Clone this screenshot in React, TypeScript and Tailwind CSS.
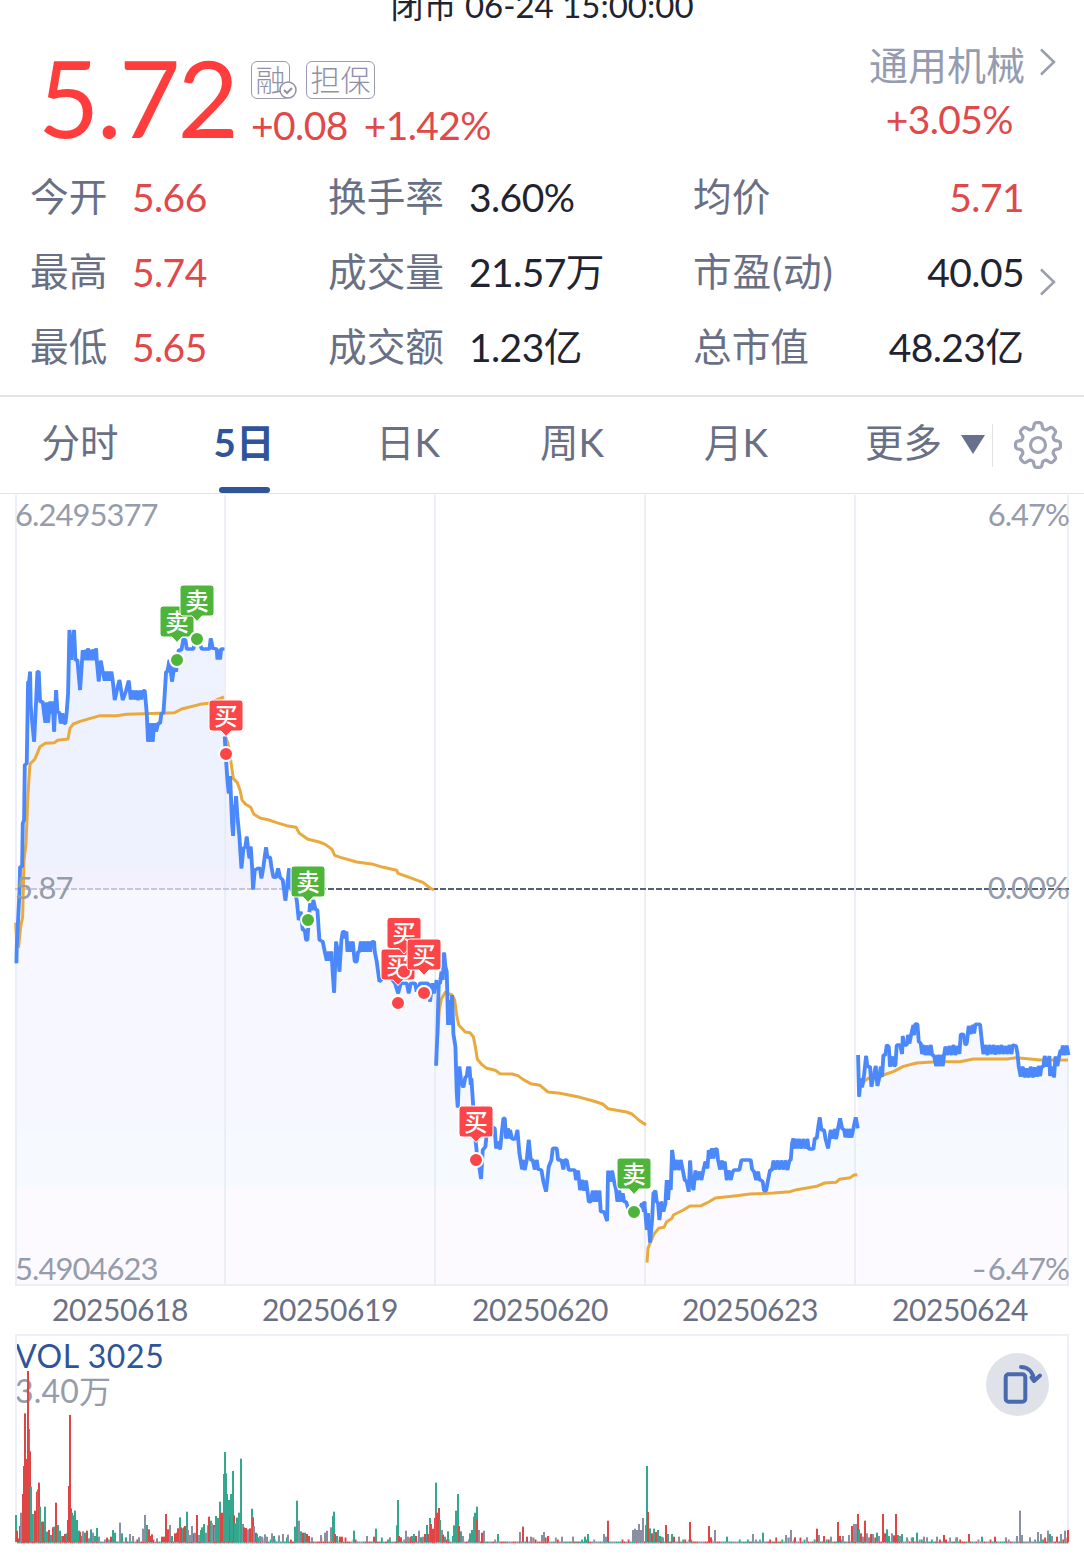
import React from "react";

const FONT = "font-['Lato','Noto_Sans_CJK_SC',sans-serif]";

type Session = { x: number; y: number; price: string; average: string; end: number; start: number };

// Each session is stored in thirds of a pixel, relative to its own origin.
const sessions: Session[] = [
  {
    x: 0, y: 560, start: 49, end: 672,
    price:
      "49 1210 50 1160 58 1000 60 920 66 920 68 790 72 780 74 615 80 610 84 365 87 365 90 335 92 440 102 545 108 425 112 335 116 335 120 425 128 425 132 460 136 488 140 428 144 488 150 425 154 460 158 425 162 515 168 390 172 455 178 458 182 490 188 460 192 490 196 490 200 455 204 400 208 210 211 240 214 300 218 240 222 210 226 300 232 300 240 390 248 270 252 300 256 270 260 300 264 265 268 300 272 270 276 300 280 268 284 300 288 265 290 300 296 364 302 302 308 335 314 362 318 335 322 362 326 335 330 362 334 335 338 362 344 420 350 392 358 360 368 420 378 392 386 362 392 418 398 392 404 418 408 392 414 420 420 392 424 418 430 392 434 392 440 460 444 545 448 490 452 545 456 490 458 545 462 490 468 515 474 490 480 490 484 460 490 460 494 400 498 335 502 335 508 300 516 365 522 320 528 335 532 300 536 270 544 270 550 237 556 240 560 267 580 267 585 240 595 240 605 267 628 267 632 235 638 265 650 267 652 298 655 270 660 298 663 267 672 267",
    average:
      "47 1088 50 1150 56 1160 62 1100 68 1070 72 900 78 850 84 700 90 612 104 598 112 580 120 560 136 550 164 548 172 541 204 537 210 505 220 492 240 484 300 467 350 467 380 463 430 461 524 458 545 447 600 433 625 430 650 420 672 411",
  },
  {
    x: 210, y: 690, start: 44, end: 680,
    price:
      "44 140 46 180 52 270 56 310 60 258 66 400 69 438 72 350 76 345 78 318 82 380 88 440 94 535 100 475 106 470 110 440 114 475 118 505 122 470 126 530 129 598 134 540 144 535 150 535 154 565 160 530 164 500 168 472 172 502 180 502 184 530 190 562 198 562 204 535 210 562 218 570 222 600 226 632 232 580 237 535 240 590 245 600 255 610 260 630 266 690 272 665 278 720 284 720 288 750 292 750 296 690 300 640 306 660 310 630 316 658 322 660 328 750 338 755 344 785 350 812 354 785 358 812 364 785 368 850 372 908 378 755 384 790 388 845 394 750 398 725 404 725 404 745 409 725 412 785 418 755 422 785 428 755 434 815 440 815 444 785 448 785 452 755 458 785 462 755 468 785 474 755 480 785 486 755 492 755 494 785 500 815 508 875 530 850 555 880 564 910 572 880 590 880 596 910 602 880 615 880 620 905 630 880 654 880 660 935 666 880 672 910 680 870",
    average:
      "46 140 54 160 62 210 70 266 82 278 90 300 96 330 106 342 122 352 132 373 150 384 180 391 200 398 230 407 258 412 268 430 294 448 328 456 346 463 366 478 374 496 394 503 440 516 490 523 520 532 560 541 564 550 600 563 640 578 660 594 672 600",
  },
  {
    x: 380, y: 900, start: 168, end: 794,
    price:
      "168 497 172 400 176 250 180 250 184 215 188 240 192 158 196 200 200 215 204 375 208 300 212 375 216 285 220 402 226 440 230 580 233 622 238 500 244 550 250 562 256 530 260 530 264 500 267 530 268 500 272 555 274 535 279 612 284 700 290 755 296 790 303 837 308 750 316 740 320 700 335 680 344 685 348 745 354 725 360 748 366 690 370 655 374 655 378 715 384 685 388 715 390 690 396 717 406 717 412 690 418 760 426 808 430 780 434 810 440 780 446 720 452 780 458 780 464 808 470 780 474 808 484 810 490 845 498 875 506 800 514 780 518 745 530 745 534 780 544 780 550 808 554 780 560 780 566 810 584 810 588 840 594 812 600 870 606 840 612 872 618 842 622 872 626 905 632 905 638 872 642 905 648 872 652 905 658 872 662 935 672 935 681 963 684 812 690 845 696 812 702 845 708 870 712 905 718 872 722 905 728 880 732 905 738 905 744 925 780 925 786 910 790 935 794 905",
    average:
      "172 420 178 330 184 297 196 277 216 285 224 300 230 345 236 375 256 396 270 398 280 410 286 440 292 478 306 494 320 505 346 511 360 521 396 522 414 527 430 539 452 551 480 556 504 576 540 580 600 592 640 603 668 612 684 626 740 636 756 642 776 660 798 675",
  },
  {
    x: 630, y: 1000, start: 44, end: 683,
    price:
      "42 605 46 640 50 690 54 640 60 728 66 660 70 580 76 572 80 605 84 610 88 660 94 605 100 635 106 610 110 540 114 600 118 540 122 570 126 450 130 480 134 510 140 480 146 510 152 480 158 510 164 540 170 545 176 575 180 482 184 545 190 570 196 512 202 540 208 515 214 540 220 510 226 485 232 505 236 450 240 475 246 445 250 475 256 447 260 447 264 480 270 508 276 482 280 508 284 485 290 540 296 512 302 540 308 515 312 510 328 510 334 480 362 480 366 508 372 515 378 540 384 515 388 540 392 540 398 545 402 572 408 572 414 540 420 510 426 510 430 482 436 508 442 482 448 508 454 482 460 508 466 482 472 510 478 482 482 480 486 430 490 415 494 445 500 417 504 445 508 417 514 445 520 417 526 445 532 417 536 447 550 447 554 415 560 415 564 385 569 352 574 390 582 390 586 415 594 445 602 390 608 415 614 387 618 417 624 385 630 355 636 385 642 390 646 412 650 387 656 412 660 387 664 412 670 385 677 352 683 385",
    average:
      "51 788 54 745 62 725 72 702 86 685 102 682 110 665 126 655 130 645 160 630 180 618 214 617 236 606 256 594 320 587 360 582 430 579 480 575 500 569 560 559 584 549 618 547 628 538 660 533 672 525 682 524",
  },
  {
    x: 840, y: 1000, start: 54, end: 685,
    price:
      "54 165 57 290 62 235 66 262 72 225 78 168 82 200 90 200 94 260 100 230 107 198 112 258 118 230 122 200 126 230 130 165 136 165 140 135 146 140 150 200 156 170 162 198 166 195 170 135 180 135 186 162 188 108 192 135 200 135 204 105 208 130 214 100 220 75 222 105 226 72 232 72 236 125 242 130 246 162 250 135 256 165 260 137 266 165 272 135 276 165 282 167 288 198 294 165 298 198 304 165 308 198 312 165 316 140 322 165 328 138 334 165 340 135 346 165 352 138 358 162 362 103 370 103 376 135 380 130 386 78 392 102 398 75 402 100 406 73 420 73 426 130 430 162 436 135 442 165 448 135 454 162 460 135 466 163 472 137 478 162 484 135 490 162 496 138 502 162 508 135 514 162 518 135 528 138 532 160 536 200 542 230 548 200 554 232 560 205 566 232 572 200 578 232 584 202 590 230 596 198 600 228 604 200 610 200 614 168 620 200 628 168 630 228 636 200 642 232 646 170 652 198 658 165 662 150 664 165 668 137 674 165 680 137 685 165",
    average:
      "66 260 72 245 84 235 120 232 130 225 160 215 190 199 230 189 290 185 360 185 400 177 500 177 530 173 570 177 600 180 684 180",
  },
];

const trades: { x: number; y: number; side: "买" | "卖" }[] = [
  { x: 177, y: 660, side: "卖" },
  { x: 197, y: 639, side: "卖" },
  { x: 226, y: 754, side: "买" },
  { x: 308, y: 920, side: "卖" },
  { x: 398, y: 1003, side: "买" },
  { x: 404, y: 971.5, side: "买" },
  { x: 424, y: 993, side: "买" },
  { x: 476, y: 1160, side: "买" },
  { x: 634, y: 1212, side: "卖" },
];

const volumes: { x: number; bars: string }[] = [
  {
    x: 0,
    bars:
      "47 675 g,52 722 r,56 745 r,60 708 r,64 668 y,68 612 r,71 528 r,74 370 r,78 507 r,81 515 r,87 417 g,84 243 r,90 484 r,93 590 g,98 672 g,102 672 y,106 662 r,111 605 r,114 598 g,117 578 r,121 650 g,126 695 g,129 695 r,135 650 g,140 725 g,147 720 r,152 735 g,158 712 r,163 710 g,168 638 r,174 705 g,180 722 g,185 738 y,190 738 r,196 732 r,200 730 g,204 690 r,207 588 r,210 375 r,213 655 r,217 668 g,222 676 g,226 662 g,230 690 g,236 722 g,240 725 r,246 738 g,250 724 y,256 728 g,261 722 r,268 745 y,273 718 g,280 728 y,286 738 g,291 714 g,297 740 y,320 743 r,334 740 r,339 720 g,344 728 g,360 698 y,366 730 g,378 742 g,390 732 y,400 738 y,416 742 y,430 716 y,435 675 y,441 705 g,446 718 r,450 738 r,456 733 r,470 745 y,486 740 r,492 740 r,498 672 r,503 718 r,510 705 y,516 738 g,525 730 r,530 728 r,535 715 r,540 682 g,544 712 r,548 715 g,552 712 r,556 708 r,561 665 g,565 720 y,570 735 y,576 708 y,582 730 r,586 728 y,591 675 r,596 735 y,602 720 g,607 712 g,612 702 g,618 728 y,624 706 y,628 680 r,632 692 g,636 700 y,641 705 r,645 712 y,648 678 g,654 684 g,660 635 g,664 668 r,668 668 r,672 552 g,675 486 g,678 550 g,682 612 g,686 630 g,690 635 g,689 680 r,694 612 g,698 543 g,702 676 r,706 700 g,711 683 g,716 668 g,720 680 y,723 506 g,728 702 y,732 712 r,738 714 r,744 718 y,750 715 r,755 656 g,759 682 r,762 708 y,768 728 r,772 732 g,780 738 y,786 740 y,794 733 y,800 740 y,816 730 y,822 738 g,836 736 y,850 732 y,864 734 y,886 710 g,891 632 g,896 692 y,902 724 g,908 728 r,914 728 g,920 732 r,926 738 r,936 742 y,964 735 y,975 728 y,982 722 y,992 712 y,998 678 g,1002 665 g,1006 732 r,1012 738 g,1020 740 r,1026 740 r,1062 722 g",
  },
  {
    x: 360,
    bars:
      "22 738 y,42 740 r,48 716 g,90 742 y,110 706 g,113 630 g,118 738 r,123 742 r,138 722 y,145 740 y,152 740 r,157 738 g,162 732 g,168 738 r,176 722 y,182 742 g,190 740 y,196 732 r,201 705 g,205 732 r,209 684 g,213 702 r,218 716 r,224 684 r,228 578 g,232 668 r,237 654 r,240 690 g,245 720 y,250 734 r,256 740 g,264 724 g,278 738 g,283 706 g,288 662 g,294 612 g,297 708 r,303 724 g,308 738 y,330 730 g,335 720 g,341 680 g,346 668 g,351 650 g,351 688 r,358 720 y,365 728 r,372 722 y,414 732 g,480 726 y,489 710 r,500 740 r,512 740 y,545 735 y,551 726 y,564 738 r,605 740 y,640 740 y,674 740 g,684 732 g,732 732 y,738 740 y,744 692 r,818 720 y,824 716 y,830 720 y,837 702 y,842 720 y,849 684 y,857 705 g,861 528 g,864 666 r,870 715 g,876 730 r,882 716 g,887 726 r,893 720 g,900 738 g,906 740 y,918 705 r,924 732 g,936 732 g,941 740 r,956 740 y,990 696 r,1047 708 r,1052 742 r,1065 720 y",
  },
  {
    x: 720,
    bars:
      "22 740 g,98 732 y,129 728 g,198 735 y,212 720 y,224 742 r,260 742 y,291 716 r,297 735 y,311 738 r,332 740 y,354 696 r,359 738 r,369 738 y,388 735 y,396 708 r,402 702 y,408 702 y,413 672 r,417 718 g,422 730 r,428 740 y,434 692 r,440 730 y,446 742 y,453 732 r,460 732 y,470 728 g,478 738 y,489 672 r,494 730 r,502 718 g,508 738 g,515 730 y,521 736 r,528 672 r,534 735 g,540 738 y,547 732 g,560 742 y,578 742 g,590 728 g,612 740 y,620 742 y,651 740 y,672 735 r,712 742 y,747 732 r,786 740 g,825 740 r,858 742 y,890 738 y,900 662 y,905 735 y,930 742 y,954 726 y,963 732 y,984 722 y,990 732 g,996 738 y,1012 740 r,1024 732 y,1035 722 y,1044 720 r",
  },
];

const barColor: Record<string, string> = { r: "#e04545", g: "#34a88f", y: "#8a8fa2" };

// Low background turnover between the peaks.
const quietBars = Array.from({ length: 520 }, (_, i) => {
  const n = Math.abs(Math.sin(i * 12.9898) * 43758.5453) % 1;
  const m = Math.abs(Math.sin(i * 78.233) * 12543.123) % 1;
  return { x: 17 + i * 2.022, h: n > 0.9 ? 5 : n > 0.72 ? 3 : 1, c: m > 0.66 ? "r" : m > 0.33 ? "y" : "g" };
});

const gridX = [16, 225, 435, 645, 855, 1068];

function PriceChart() {
  return (
    <svg className="block" width="1084" height="793" viewBox="0 494 1084 793">
      <defs>
        <linearGradient id="area" gradientUnits="userSpaceOnUse" x1="0" y1="600" x2="0" y2="1285">
          <stop offset="0" stopColor="#eef3ff" />
          <stop offset="0.38" stopColor="#eef1fe" />
          <stop offset="0.42" stopColor="#f5f1fd" />
          <stop offset="0.422" stopColor="#f6f7ff" />
          <stop offset="0.773" stopColor="#f6f7ff" />
          <stop offset="0.774" stopColor="#f6faff" />
          <stop offset="0.857" stopColor="#f6faff" />
          <stop offset="0.858" stopColor="#fdfaff" />
          <stop offset="1" stopColor="#fdfaff" />
        </linearGradient>
      </defs>
      {sessions.map((s) => (
        <g key={s.x}>
          <clipPath id={`clip${s.x}`}>
            <polygon
              transform={`translate(${s.x} ${s.y}) scale(0.33333)`}
              points={`${s.start} ${(1285 - s.y) * 3} ${s.price} ${s.end} ${(1285 - s.y) * 3}`}
            />
          </clipPath>
          <rect x="0" y="560" width="1084" height="725" fill="url(#area)" clipPath={`url(#clip${s.x})`} />
        </g>
      ))}
      <g stroke="#dfe6f0" strokeOpacity="0.6" strokeWidth="2">
        {gridX.map((x) => (
          <line key={x} x1={x} x2={x} y1="495" y2="1285" />
        ))}
        <line x1="15" x2="1069" y1="1285" y2="1285" />
      </g>
      <line x1="15" x2="296" y1="889" y2="889" stroke="#c3c6dc" strokeWidth="2" strokeDasharray="6 2" />
      <line x1="296" x2="1069" y1="889" y2="889" stroke="#52617f" strokeWidth="2" strokeDasharray="6 2" />
      {sessions.map((s) => (
        <g
          key={s.x}
          transform={`translate(${s.x} ${s.y}) scale(0.33333)`}
          fill="none"
          strokeWidth="9"
          strokeLinejoin="round"
        >
          <polyline points={s.average} stroke="#e9a93c" />
          <polyline points={s.price} stroke="#4b88fb" strokeLinejoin="bevel" transform="translate(-1 0)" />
          <polyline points={s.price} stroke="#4b88fb" strokeLinejoin="bevel" transform="translate(1.5 0)" />
        </g>
      ))}
      {trades.map((t) => (
        <g key={`${t.x}-${t.y}`} fill={t.side === "买" ? "#fc4548" : "#4fb43a"}>
          <path
            d={`M${t.x - 14} ${t.y - 54}h28a3 3 0 0 1 3 3v25a3 3 0 0 1 -3 3h-9l-5 5.500l-5 -5.500h-9a3 3 0 0 1 -3 -3v-25a3 3 0 0 1 3 -3z`}
            stroke="#fff"
            strokeWidth="1"
          />
          <text
            x={t.x - 0.5}
            y={t.y - 29.5}
            textAnchor="middle"
            fill="#fff"
            className="font-['Noto_Sans_CJK_SC',sans-serif] text-[23.5px] font-medium"
          >
            {t.side}
          </text>
          <circle cx={t.x} cy={t.y} r="7" stroke="#fff" strokeWidth="2" />
        </g>
      ))}
    </svg>
  );
}

function VolumeChart() {
  return (
    <svg className="block" width="1084" height="223" viewBox="0 1334 1084 223">
      <path d="M16 1544V1335H1068V1544M15 1543H1069" fill="none" stroke="#edf0f6" strokeWidth="2" />
      {quietBars.map((b) => (
        <rect key={b.x} x={b.x} y={1542.5 - b.h} width="1.900" height={b.h + 0.8} fill={barColor[b.c]} />
      ))}
      {volumes.map((v) =>
        v.bars.split(",").map((bar) => {
          const [x, top, c] = bar.split(" ");
          const y = 1290 + Number(top) / 3;
          return (
            <rect
              key={`${v.x}-${bar}`}
              x={Math.round(v.x + Number(x) / 3 - 1)}
              y={y}
              width="2"
              height={1542 - y}
              fill={barColor[c]}
            />
          );
        }),
      )}
    </svg>
  );
}

const gearPath =
  Array.from({ length: 144 }, (_, i) => {
    const a = (i / 144) * Math.PI * 2;
    const r = 19.6 + 2.9 * Math.tanh(2.2 * Math.cos(8 * a) + 0.3);
    return `${i ? "L" : "M"}${(25 + r * Math.cos(a)).toFixed(2)} ${(25 + r * Math.sin(a)).toFixed(2)}`;
  }).join("") + "Z";

function Gear() {
  return (
    <svg width="50" height="50" viewBox="0 0 50 50" fill="none" stroke="#9da3b4" strokeWidth="3.200" strokeLinejoin="round">
      <path d={gearPath} />
      <circle cx="25" cy="25" r="7.500" />
    </svg>
  );
}

function Chevron() {
  return (
    <svg className="block" width="18" height="28" viewBox="0 0 18 28" fill="none" stroke="#9a9dab" strokeWidth="2.500">
      <path d="M2 1.500L15 14L2 26.500" />
    </svg>
  );
}

function Num({ children }: { children: React.ReactNode }) {
  return <span className="relative top-px text-[39px] tracking-[-0.6px]">{children}</span>;
}

const rows = [
  { a: "今开", av: "5.66", b: "换手率", bv: "3.60%", bu: "", c: "均价", cv: "5.71", cu: "", red: true, more: false },
  { a: "最高", av: "5.74", b: "成交量", bv: "21.57", bu: "万", c: "市盈(动)", cv: "40.05", cu: "", red: false, more: true },
  { a: "最低", av: "5.65", b: "成交额", bv: "1.23", bu: "亿", c: "总市值", cv: "48.23", cu: "亿", red: false, more: false },
];

const tabs = ["分时", "5日", "日K", "周K", "月K"];
const dates = ["20250618", "20250619", "20250620", "20250623", "20250624"];

export default function App() {
  return (
    <main className={`${FONT} flex h-[1557px] w-[1084px] flex-col overflow-hidden bg-white text-[#1f2430]`}>
      <div className="h-[35px] shrink-0 text-center text-[33px] leading-[11px]">闭市 06-24 15:00:00</div>

      <header className="flex h-[124px] shrink-0 justify-between pr-[27px] pl-[38px]">
        <div className="flex">
          <div className="w-[213px] text-[106px] leading-[124px] tracking-[-2.8px] text-[#ff3d3d]">5.72</div>
          <div className="pt-[26px]">
            <div className="flex gap-4 text-[30px] leading-[35px] font-light text-[#8f90a8]">
              <span className="relative flex h-[38px] w-[39px] justify-center rounded-md border-[1.5px] border-[#9a9bb2]">
                融
                <svg className="absolute -right-[9px] -bottom-[2px]" width="20" height="20" viewBox="0 0 20 20" fill="#fff" stroke="#8f90a8" strokeWidth="1.500">
                  <circle cx="10" cy="10" r="8" />
                  <path d="M6 10l3 3 5-5" fill="none" strokeWidth="2" />
                </svg>
              </span>
              <span className="flex h-[38px] w-[69px] justify-center rounded-md border-[1.5px] border-[#9a9bb2]">担保</span>
            </div>
            <div className="flex gap-4 text-[39px] leading-[53px] tracking-[-0.6px] text-[#e0484a]">
              <span>+0.08</span>
              <span>+1.42%</span>
            </div>
          </div>
        </div>
        <div className="flex gap-3.5">
          <div className="pt-1 text-right">
            <div className="text-[39px] leading-[52px] text-[#959caf]">通用机械</div>
            <div className="pr-3 text-[39px] leading-[57px] tracking-[-0.6px] text-[#e0484a]">+3.05%</div>
          </div>
          <div className="pt-[13px]">
            <Chevron />
          </div>
        </div>
      </header>

      <section className="flex h-[236px] shrink-0 flex-col pl-[30px] text-[38.7px] leading-[75px]">
        {rows.map((r) => (
          <div key={r.a} className="flex h-[75px] whitespace-nowrap text-[#697085]">
            <span className="w-[102px]">{r.a}</span>
            <span className="w-[196px] text-[#e0484a]"><Num>{r.av}</Num></span>
            <span className="w-[141px]">{r.b}</span>
            <span className="w-[224px] text-[#1f2430]"><Num>{r.bv}</Num>{r.bu}</span>
            <span className={r.more ? "w-[160px] tracking-[0.8px]" : "w-[160px]"}>{r.c}</span>
            <span className={r.red ? "w-[171px] text-right text-[#e0484a]" : "w-[171px] text-right text-[#1f2430]"}>
              <Num>{r.cv}</Num>{r.cu}
            </span>
            {r.more && (
              <span className="pt-[34px] pl-[15px]"><Chevron /></span>
            )}
          </div>
        ))}
      </section>

      <nav className="flex h-[99px] shrink-0 border-t-2 border-b border-[#e2e3e6] text-[38.5px] text-[#697085]">
        <div className="-ml-0.5 flex">
          {tabs.map((t) =>
            t === "5日" ? (
              <div key={t} className="flex w-[164px] flex-col items-center font-bold text-[#30549a]">
                <span className="h-[90px] leading-[90px]">{t}</span>
                <span className="h-1.5 w-[51px] rounded-full bg-[#30549a]" />
              </div>
            ) : (
              <div key={t} className="w-[164px] text-center leading-[90px]">{t}</div>
            ),
          )}
        </div>
        <div className="flex pl-[47px]">
          <span className="w-[96px] leading-[90px]">更多</span>
          <svg className="mt-[38px]" width="24" height="19" viewBox="0 0 24 19" fill="#65718d"><path d="M0 0H24L12 19z" /></svg>
          <span className="mt-[27px] ml-[7px] h-[43px] w-px bg-[#e2e3e6]" />
          <span className="mt-[23px] ml-5"><Gear /></span>
        </div>
      </nav>

      <section className="relative h-[791px] shrink-0 text-[31px] leading-[38px] tracking-[-0.95px] text-[#959cab]">
        <PriceChart />
        <span className="absolute top-px left-[15px]">6.2495377</span>
        <span className="absolute top-px right-[15px]">6.47%</span>
        <span className="absolute top-[374px] left-[15px]">5.87</span>
        <span className="absolute top-[374px] right-[15px]">0.00%</span>
        <span className="absolute top-[755px] left-[15px]">5.4904623</span>
        <span className="absolute top-[755px] right-[15px]">
          <span className="mr-0.5 inline-block origin-right scale-x-130">-</span>6.47%
        </span>
      </section>

      <div className="flex h-[49px] shrink-0 pl-[15px] text-[30px] leading-[49px] tracking-[-0.4px] text-[#697085]">
        {dates.map((d) => (
          <span key={d} className="w-[210px] text-center">{d}</span>
        ))}
      </div>

      <section className="relative h-[223px] shrink-0">
        <div className="absolute top-[4px] left-[15px] flex flex-col text-[32px] leading-[36px]">
          <span className="tracking-[0.6px] text-[#30549a]">VOL 3025</span>
          <span className="-mt-px tracking-[0.2px] text-[#959cab]">3.40万</span>
        </div>
        <div className="relative"><VolumeChart /></div>
        <span className="absolute top-[19px] left-[986px] flex size-[63px] rounded-full bg-[#dfe2e8]">
          <svg width="63" height="63" viewBox="0 0 63 63" fill="none" stroke="#4a6aad" strokeWidth="4" strokeLinejoin="round" strokeLinecap="round">
            <rect x="19.700" y="21.300" width="19.600" height="27.400" rx="3" />
            <path d="M35 14C42 14 47 19 48 27M45.500 24.500L48 28L54 22.500" />
          </svg>
        </span>
      </section>
    </main>
  );
}
